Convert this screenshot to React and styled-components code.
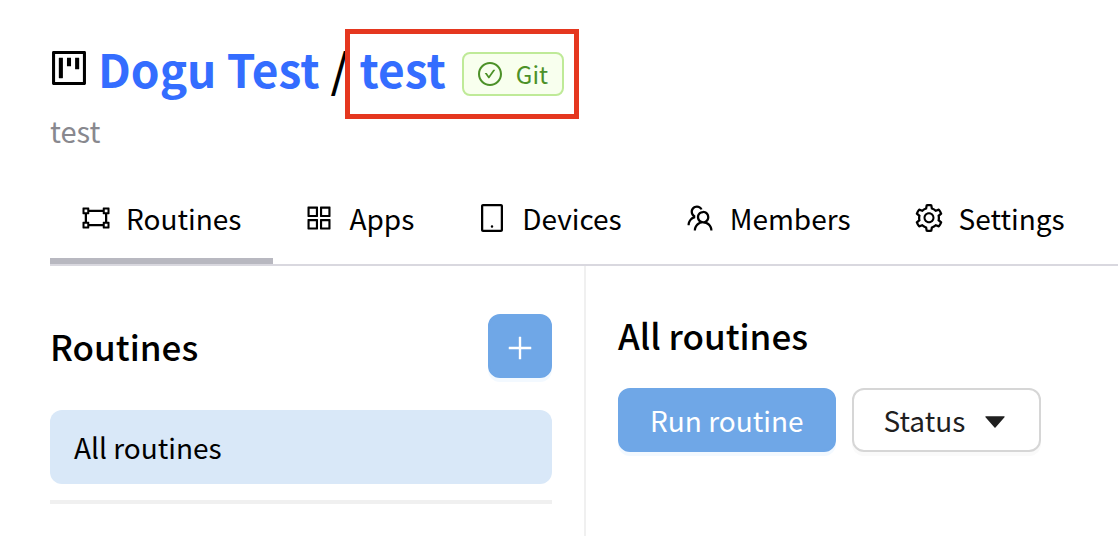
import React from "react";
import styled, { createGlobalStyle } from "styled-components";
import {
  AiOutlineProject,
  AiOutlineGateway,
  AiOutlineAppstore,
  AiOutlineTablet,
  AiOutlineTeam,
  AiOutlineSetting,
  AiOutlineCheckCircle,
  AiOutlinePlus,
  AiFillCaretDown,
} from "react-icons/ai";

// Ant icons keep a 64 unit margin on each side; this box trims it.
const TRIMMED = "64 64 896 896";

const GlobalStyle = createGlobalStyle`
  *, *::before, *::after { box-sizing: border-box; }
  body {
    margin: 0;
    background: #fff;
    color: #000;
    font-family: "Noto Sans CJK KR", "Noto Sans", sans-serif;
    font-size: 28px;
    line-height: 44px;
  }
  h1, h2, p, ul { margin: 0; padding: 0; }
  button { font: inherit; cursor: pointer; }
  a { color: inherit; text-decoration: none; }
  svg { display: block; flex: none; }
`;

const Page = styled.div`
  display: flex;
  flex-direction: column;
  min-height: 100vh;
  padding-left: 50px;
`;

const Header = styled.header`
  padding-top: 40px;
`;

const Title = styled.h1`
  display: flex;
  align-items: center;
  font-size: 46px;
  line-height: 56px;
  font-weight: 700;
`;

const TitleLink = styled.a`
  color: #346dff;
`;

const OrganizationLink = styled(TitleLink)`
  margin-left: 10px;
`;

const Slash = styled.span`
  font-weight: 500;
  padding: 0 11px;
`;

const Highlight = styled.span`
  position: relative;
  display: flex;
  align-items: flex-end;
  gap: 16px;

  &::after {
    content: "";
    position: absolute;
    inset: -11px -15px -23px;
    border: 5px solid #e5371f;
    pointer-events: none;
  }
`;

const Badge = styled.span`
  display: flex;
  align-items: center;
  gap: 14px;
  height: 44px;
  padding: 0 14px;
  border: 2px solid #bfea98;
  border-radius: 8px;
  background: #f8ffee;
  color: #4c9128;
  font-size: 24px;
  font-weight: 400;
  line-height: 40px;
`;

const Description = styled.p`
  margin-top: 18px;
  color: #88888e;
  font-size: 29px;
  line-height: 32px;
`;

const Tabs = styled.nav`
  display: flex;
  margin-top: 28px;
  border-bottom: 2px solid #d9d8df;
`;

const Tab = styled.a`
  display: flex;
  align-items: center;
  gap: 16px;
  height: 90px;
  padding: 4px 32px 0;
  border-bottom: 6px solid ${(p) => (p.$active ? "#b8b8c0" : "transparent")};
  white-space: nowrap;
`;

const Body = styled.div`
  display: flex;
  flex: 1;
`;

const Sidebar = styled.aside`
  flex: 0 0 536px;
  padding: 48px 32px 32px 0;
  border-right: 2px solid #f0f0f0;
`;

const SidebarHeader = styled.div`
  display: flex;
  align-items: center;
  justify-content: space-between;
`;

const Heading = styled.h2`
  font-size: 35px;
  line-height: 42px;
  font-weight: 500;
`;

const Button = styled.button`
  display: flex;
  align-items: center;
  justify-content: center;
  gap: 16px;
  height: 64px;
  padding: ${(p) => (p.$square ? "0" : "0 30px")};
  width: ${(p) => (p.$square ? "64px" : "auto")};
  border: 2px solid ${(p) => (p.$primary ? "#6fa7e7" : "#d6d6d6")};
  border-radius: 12px;
  background: ${(p) => (p.$primary ? "#6fa7e7" : "#fff")};
  color: ${(p) => (p.$primary ? "#fff" : "#1f1f1f")};
  box-shadow: 0 4px 0 ${(p) => (p.$primary ? "#f3f9ff" : "#fafafa")};
  white-space: nowrap;

  svg {
    margin-top: 4px;
  }
`;

const RoutineList = styled.ul`
  list-style: none;
  margin-top: 32px;
  padding-bottom: 16px;
  border-bottom: 4px solid #f0f0f0;
`;

const RoutineLink = styled.a`
  display: block;
  padding: 15px 24px;
  border-radius: 12px;
  background: #d9e8f8;
`;

const Main = styled.main`
  flex: 1;
  padding: 48px 32px;
`;

const Actions = styled.div`
  display: flex;
  gap: 16px;
  margin-top: 32px;
`;

const tabs = [
  { label: "Routines", Icon: AiOutlineGateway, active: true },
  { label: "Apps", Icon: AiOutlineAppstore },
  { label: "Devices", Icon: AiOutlineTablet },
  { label: "Members", Icon: AiOutlineTeam },
  { label: "Settings", Icon: AiOutlineSetting },
];

export default function App() {
  return (
    <Page>
      <GlobalStyle />
      <Header>
        <Title>
          <AiOutlineProject size={38} viewBox={TRIMMED} />
          <OrganizationLink href="#organization">Dogu Test</OrganizationLink>
          <Slash>/</Slash>
          <Highlight>
            <TitleLink href="#project">test</TitleLink>
            <Badge>
              <AiOutlineCheckCircle size={24} viewBox={TRIMMED} />
              Git
            </Badge>
          </Highlight>
        </Title>
        <Description>test</Description>
      </Header>
      <Tabs>
        {tabs.map(({ label, Icon, active }) => (
          <Tab key={label} href={`#${label.toLowerCase()}`} $active={active}>
            <Icon size={28} viewBox={TRIMMED} />
            {label}
          </Tab>
        ))}
      </Tabs>
      <Body>
        <Sidebar>
          <SidebarHeader>
            <Heading>Routines</Heading>
            <Button $primary $square aria-label="Add routine">
              <AiOutlinePlus size={32} />
            </Button>
          </SidebarHeader>
          <RoutineList>
            <li>
              <RoutineLink href="#all">All routines</RoutineLink>
            </li>
          </RoutineList>
        </Sidebar>
        <Main>
          <Heading>All routines</Heading>
          <Actions>
            <Button $primary>Run routine</Button>
            <Button>
              Status
              <AiFillCaretDown size={28} />
            </Button>
          </Actions>
        </Main>
      </Body>
    </Page>
  );
}
